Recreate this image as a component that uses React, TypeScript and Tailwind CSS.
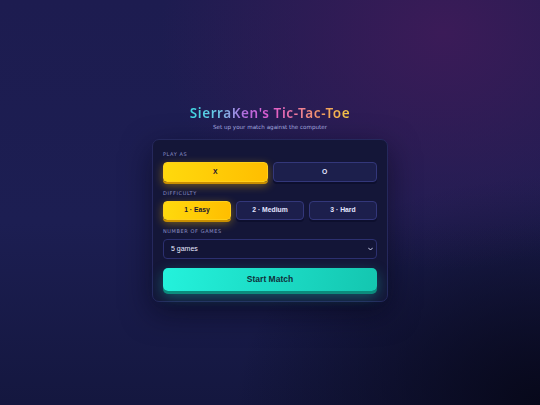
import { useState } from "react";

const sans = "font-['Liberation_Sans',Arial,sans-serif]";
const deja = "font-['DejaVu_Sans',sans-serif]";

function Label({ children }: { children: React.ReactNode }) {
  return (
    <div className={`${deja} mb-[4px] text-[5px] leading-[7px] tracking-[0.6px] text-[#8a8fc6]`}>
      {children}
    </div>
  );
}

function Choice({ active, children, onClick }: { active: boolean; children: React.ReactNode; onClick: () => void }) {
  return (
    <button
      onClick={onClick}
      className={
        active
          ? `${sans} flex-1 rounded-[4px] border border-[#ffcf1a] bg-[linear-gradient(90deg,#ffd90d,#ffbe00)] text-[6.8px] font-bold text-[#1a1630] shadow-[0_2px_0_#c98f00,0_3px_10px_rgba(255,196,0,0.45)]`
          : `${sans} flex-1 rounded-[4px] border border-[#33377a] bg-[#1c1f4c] text-[6.8px] font-bold text-[#e4e6ff] shadow-[0_2px_0_#0d0f2e]`
      }
    >
      {children}
    </button>
  );
}

export default function App() {
  const [side, setSide] = useState("X");
  const [level, setLevel] = useState(1);
  const [games, setGames] = useState("5");

  return (
    <div className="flex h-[405px] w-[540px] flex-col items-center overflow-hidden bg-[radial-gradient(ellipse_at_82%_8%,#3b1b58_0%,rgba(59,27,88,0)_45%),radial-gradient(ellipse_at_100%_100%,#07081a_0%,rgba(7,8,26,0)_40%),linear-gradient(180deg,#1d1c50_0%,#1c1e52_55%,#14173f_100%)] pt-[104px]">
      <h1 className="bg-[linear-gradient(90deg,#3fd8e2_0%,#6fc6e6_18%,#b46ee0_34%,#e05ad0_50%,#ee7aa0_66%,#f29a62_82%,#f5c842_100%)] bg-clip-text font-['Noto_Sans',sans-serif] text-[13.5px] font-semibold leading-[19px] tracking-[0.6px] text-transparent">
        SierraKen's Tic-Tac-Toe
      </h1>
      <p className={`${deja} text-[5.6px] leading-[8px] text-[#a9afe2]`}>Set up your match against the computer</p>

      <div className="mt-[8px] w-[236px] rounded-[7px] border border-[#25285c] bg-[#141638] px-[10px] pb-[10px] pt-[11px] shadow-[0_10px_30px_rgba(5,5,20,0.55)]">
        <Label>PLAY AS</Label>
        <div className="flex h-[20px] gap-[5px]">
          <Choice active={side === "X"} onClick={() => setSide("X")}>X</Choice>
          <Choice active={side === "O"} onClick={() => setSide("O")}>O</Choice>
        </div>

        <div className="mt-[8px]">
          <Label>DIFFICULTY</Label>
          <div className="flex h-[19px] gap-[5px]">
            <Choice active={level === 1} onClick={() => setLevel(1)}>1 · Easy</Choice>
            <Choice active={level === 2} onClick={() => setLevel(2)}>2 · Medium</Choice>
            <Choice active={level === 3} onClick={() => setLevel(3)}>3 · Hard</Choice>
          </div>
        </div>

        <div className="mt-[8px]">
          <Label>NUMBER OF GAMES</Label>
          <div className="relative">
            <select
              value={games}
              onChange={(e) => setGames(e.target.value)}
              className={`${sans} block h-[20px] w-full appearance-none rounded-[4px] border border-[#2c3070] bg-[#131537] pl-[7px] text-[7px] text-[#e8eaff] outline-none`}
            >
              <option value="1">1 game</option>
              <option value="3">3 games</option>
              <option value="5">5 games</option>
              <option value="7">7 games</option>
            </select>
            <svg className="pointer-events-none absolute right-[4px] top-[8px] h-[4px] w-[5px]" viewBox="0 0 10 6" fill="none">
              <path d="M1 1l4 4 4-4" stroke="#e0e3ff" strokeWidth="1.8" strokeLinecap="round" strokeLinejoin="round" />
            </svg>
          </div>
        </div>

        <button
          className={`${sans} mt-[9px] h-[23px] w-full rounded-[5px] bg-[linear-gradient(100deg,#24f2dc,#14c6b0)] text-[8.5px] font-bold text-[#0f2f3a] shadow-[0_3px_0_#0c8c7d,0_5px_14px_rgba(30,230,200,0.35)]`}
        >
          Start Match
        </button>
      </div>
    </div>
  );
}
